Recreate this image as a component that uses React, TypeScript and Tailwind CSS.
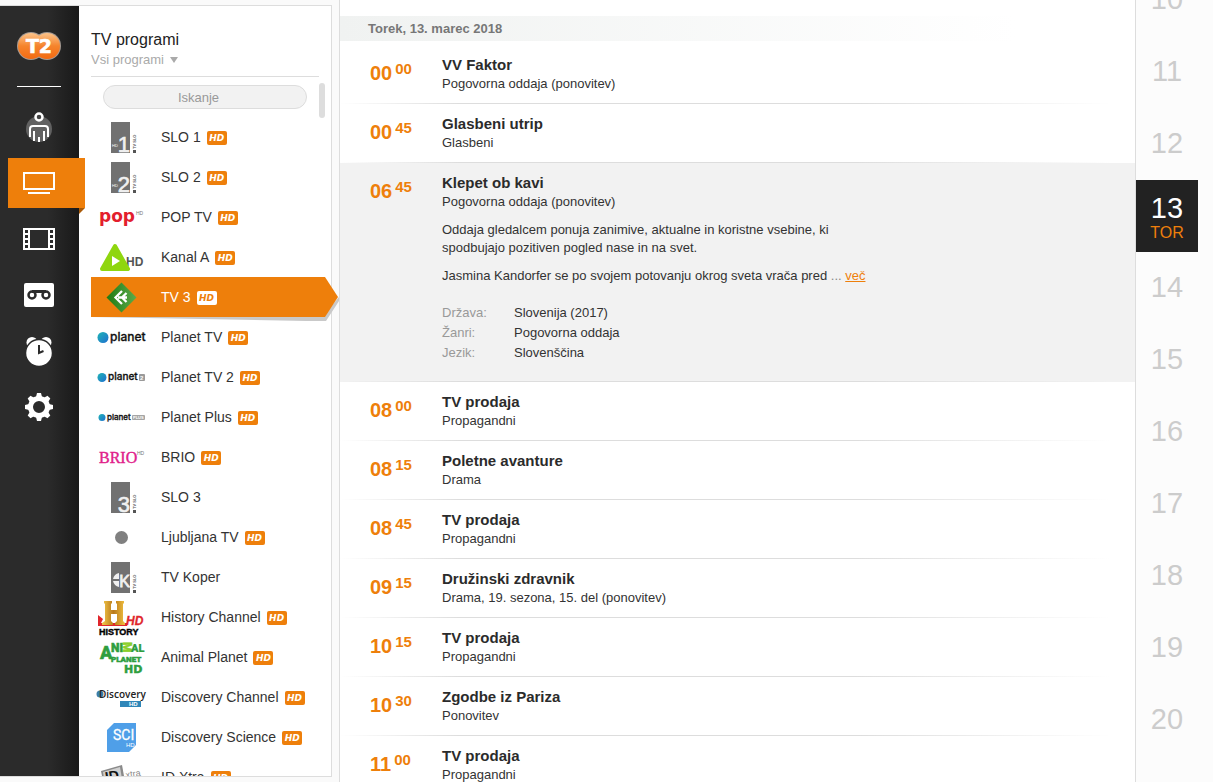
import type { ReactNode } from "react";

const SANS = "font-['Liberation_Sans',Arial,sans-serif]";

type Channel = {
  name: string;
  hd?: boolean;
  active?: boolean;
  logo: ReactNode;
};

type Show = {
  hour: string;
  minute: string;
  title: string;
  info: string;
  open?: boolean;
};

function SloLogo({ digit, hd }: { digit?: string; hd?: boolean }) {
  return (
    <g>
      <rect x="20" y="5" width="19" height="31" fill="#717171" />
      {digit && (
        <text x="39" y="35" fontSize="22" textAnchor="end" fill="#f0f0f0" stroke="#f0f0f0" strokeWidth="0.6">
          {digit}
        </text>
      )}
      {hd && (
        <text x="21" y="30" fontSize="4" fill="#ffffff">
          HD
        </text>
      )}
      <text x="45" y="32" fontSize="4" fontWeight="700" fill="#555555" transform="rotate(-90 45 32)">
        TV SLO
      </text>
      <rect x="42" y="33" width="3" height="3" fill="#555555" />
    </g>
  );
}

function PlanetLogo({ size, tag }: { size: number; tag?: string }) {
  const r = size === 13 ? 5.5 : size === 10 ? 4.5 : 3.5;
  return (
    <g>
      <defs>
        <linearGradient id={`planet${size}`} x1="0" y1="0" x2="1" y2="1">
          <stop offset="0" stopColor="#1fb5b5" />
          <stop offset="1" stopColor="#1f6fd0" />
        </linearGradient>
      </defs>
      <circle cx={size === 13 ? 12 : 11} cy="20.500" r={r} fill={`url(#planet${size})`} />
      <text
        x={size === 13 ? 19 : size === 10 ? 17 : 16}
        y={size === 13 ? 24 : 23}
        fontSize={size === 13 ? 12 : size === 10 ? 10 : 8}
        fontFamily="Inter, sans-serif"
        fontWeight="500"
        fill="#111111"
        stroke="#111111"
        strokeWidth="0.300"
      >
        planet
      </text>
      {tag === "2" && (
        <>
          <rect x="48" y="17" width="6" height="7" rx="1" fill="#9a9a9a" />
          <text x="49" y="23" fontSize="6" fontWeight="700" fill="#ffffff">
            2
          </text>
        </>
      )}
      {tag === "PLUS" && (
        <>
          <rect x="41" y="18" width="13" height="5" rx="1" fill="#a5a5a5" />
          <text x="42" y="22" fontSize="4" fontWeight="700" fill="#ffffff">
            PLUS
          </text>
        </>
      )}
    </g>
  );
}

const channels: Channel[] = [
  { name: "SLO 1", hd: true, logo: <SloLogo digit="1" hd /> },
  { name: "SLO 2", hd: true, logo: <SloLogo digit="2" hd /> },
  {
    name: "POP TV",
    hd: true,
    logo: (
      <g>
        <text
          x="8"
          y="25"
          fontSize="17"
          fontWeight="700"
          fontFamily="DejaVu Sans, sans-serif"
          fill="#e31e2d"
        >
          pop
        </text>
        <text x="45" y="18" fontSize="5" fill="#777777">
          HD
        </text>
      </g>
    ),
  },
  {
    name: "Kanal A",
    hd: true,
    logo: (
      <g>
        <text x="35" y="29" fontSize="12" fontWeight="700" fill="#555555">
          HD
        </text>
        <path d="M24 9 L37 32 H11 Z" fill="#8fd60f" stroke="#8fd60f" strokeWidth="4" strokeLinejoin="round" />
        <path d="M21 19 L29 24 L21 29 Z" fill="#ffffff" />
      </g>
    ),
  },
  {
    name: "TV 3",
    hd: true,
    active: true,
    logo: (
      <g>
        <defs>
          <linearGradient id="tv3">
            <stop offset="0" stopColor="#207a12" />
            <stop offset="1" stopColor="#5bab4a" />
          </linearGradient>
        </defs>
        <path d="M30.500 5.500 L45.500 20.500 L30.500 35.500 L15.500 20.500 Z" fill="url(#tv3)" />
        <path
          d="M31 14 L24.500 20.500 L31 27 M35.500 16 L31 20.500 L35.500 25 M27 20.500 H36"
          fill="none"
          stroke="#ffffff"
          strokeWidth="2.300"
        />
      </g>
    ),
  },
  { name: "Planet TV", hd: true, logo: <PlanetLogo size={13} /> },
  { name: "Planet TV 2", hd: true, logo: <PlanetLogo size={10} tag="2" /> },
  { name: "Planet Plus", hd: true, logo: <PlanetLogo size={8} tag="PLUS" /> },
  {
    name: "BRIO",
    hd: true,
    logo: (
      <g>
        <text x="8" y="26" fontSize="16" fontFamily="Liberation Serif, serif" fill="#e0218a" stroke="#e0218a" strokeWidth="0.4">
          BRIO
        </text>
        <text x="46" y="18" fontSize="5" fill="#777777">
          HD
        </text>
      </g>
    ),
  },
  { name: "SLO 3", logo: <SloLogo digit="3" /> },
  { name: "Ljubljana TV", hd: true, logo: <circle cx="30.500" cy="20.500" r="6.500" fill="#808080" /> },
  {
    name: "TV Koper",
    logo: (
      <g>
        <SloLogo />
        <path d="M28 16 V22 H22 A8 8 0 0 1 28 16 Z M28 30 V24 H22 A8 8 0 0 0 28 30 Z" fill="#f0f0f0" />
        <text x="39" y="30" textAnchor="end" fontSize="16" fill="#f0f0f0" stroke="#f0f0f0" strokeWidth="0.800">
          K
        </text>
      </g>
    ),
  },
  {
    name: "History Channel",
    hd: true,
    logo: (
      <g>
        <defs>
          <linearGradient id="gold">
            <stop offset="0" stopColor="#f3c94b" />
            <stop offset="0.5" stopColor="#b9791a" />
            <stop offset="1" stopColor="#f0c040" />
          </linearGradient>
        </defs>
        <path d="M7 18 L12 22 L10 26 H36 V29 H7 Z" fill="#e0262c" />
        <path
          d="M13 4 H21 V6 L20 7 V13 H26 V7 L25 6 V4 H33 V6 L32 7 V24 L34 26 V28 H24 V26 L26 24 V17 H20 V24 L22 26 V28 H11 V26 L14 24 V7 L13 6 Z"
          fill="url(#gold)"
        />
        <text x="35" y="28" fontSize="12" fontWeight="700" fontStyle="italic" fill="#e0262c" stroke="#e0262c" strokeWidth="0.300">
          HD
        </text>
        <text x="8" y="38" fontSize="9" fontWeight="700" fill="#000000" stroke="#000000" strokeWidth="0.400">
          HISTORY
        </text>
      </g>
    ),
  },
  {
    name: "Animal Planet",
    hd: true,
    logo: (
      <g fontWeight="900" fill="#2f9e3f" stroke="#2f9e3f" strokeWidth="0.500" fontFamily="Roboto, sans-serif">
        <text x="9" y="22" fontSize="18">
          A
        </text>
        <text x="20" y="15" fontSize="12">
          NI
        </text>
        <text x="32" y="5" fontSize="12" fill="#8ccf2a" stroke="#8ccf2a" transform="rotate(90 32 5)">
          M
        </text>
        <text x="40" y="15" fontSize="11" strokeWidth="0.200">
          AL
        </text>
        <text x="20" y="25" fontSize="8">
          PLANET
        </text>
        <text x="33" y="36" fontSize="11" fontFamily="DejaVu Sans, sans-serif">
          HD
        </text>
      </g>
    ),
  },
  {
    name: "Discovery Channel",
    hd: true,
    logo: (
      <g>
        <circle cx="9" cy="17" r="3.500" fill="#3d7fa8" />
        <text x="8" y="21" fontSize="10" fontFamily="Open Sans, sans-serif" fontWeight="600" fill="#222222">
          Discovery
        </text>
        <rect x="29" y="24" width="21" height="6" fill="#2f86b8" />
        <text x="38" y="29" fontSize="6" fontWeight="700" fill="#ffffff">
          HD
        </text>
      </g>
    ),
  },
  {
    name: "Discovery Science",
    hd: true,
    logo: (
      <g>
        <path d="M23 6 H45 V28 L38 35 H16 V13 Z" fill="#4f9fe8" />
        <text x="22" y="23" fontSize="14" fontFamily="Roboto, sans-serif" fill="#ffffff" stroke="#ffffff" strokeWidth="0.300">
          SCI
        </text>
        <text x="35" y="30" fontSize="6" fill="#ffffff">
          HD
        </text>
      </g>
    ),
  },
  {
    name: "ID Xtra",
    hd: true,
    logo: (
      <g>
        <path d="M10 14 L31 8 L35 30 L14 34 Z" fill="#8a8a8a" />
        <path d="M12 15 L29 10 L32 28 L15 32 Z" fill="#d0d0d0" />
        <text x="15" y="25" fontSize="14" fontWeight="700" fill="#111111" transform="rotate(-10 15 25)">
          ID
        </text>
        <text x="35" y="21" fontSize="9" fill="#888888" transform="rotate(-8 35 21)">
          xtra
        </text>
      </g>
    ),
  },
];

const shows: Show[] = [
  { hour: "00", minute: "00", title: "VV Faktor", info: "Pogovorna oddaja (ponovitev)" },
  { hour: "00", minute: "45", title: "Glasbeni utrip", info: "Glasbeni" },
  { hour: "06", minute: "45", title: "Klepet ob kavi", info: "Pogovorna oddaja (ponovitev)", open: true },
  { hour: "08", minute: "00", title: "TV prodaja", info: "Propagandni" },
  { hour: "08", minute: "15", title: "Poletne avanture", info: "Drama" },
  { hour: "08", minute: "45", title: "TV prodaja", info: "Propagandni" },
  { hour: "09", minute: "15", title: "Družinski zdravnik", info: "Drama, 19. sezona, 15. del (ponovitev)" },
  { hour: "10", minute: "15", title: "TV prodaja", info: "Propagandni" },
  { hour: "10", minute: "30", title: "Zgodbe iz Pariza", info: "Ponovitev" },
  { hour: "11", minute: "00", title: "TV prodaja", info: "Propagandni" },
];

const facts = [
  ["Država:", "Slovenija (2017)"],
  ["Žanri:", "Pogovorna oddaja"],
  ["Jezik:", "Slovenščina"],
];

const days = [10, 11, 12, 13, 14, 15, 16, 17, 18, 19, 20];

const gearTeeth = [0, 45, 90, 135, 180, 225, 270, 315];

const menu = [
  {
    label: "Profil",
    icon: (
      <>
        <circle cx="16" cy="18" r="13" fill="#616161" />
        <circle cx="16" cy="6" r="3.500" fill="#444444" stroke="#ffffff" strokeWidth="2.500" />
        <path
          d="M7 26 V18 Q7 15 10 15 H22 Q25 15 25 18 V26 M11 20 V30 M21 20 V30 M16 26 V31"
          fill="none"
          stroke="#ffffff"
          strokeWidth="2"
        />
      </>
    ),
  },
  {
    label: "Televizija",
    active: true,
    icon: (
      <>
        <rect x="1" y="6" width="30" height="16" fill="none" stroke="#ffffff" strokeWidth="2" />
        <path d="M5 26 H27" stroke="#ffffff" strokeWidth="2" />
      </>
    ),
  },
  {
    label: "Videoteka",
    icon: (
      <>
        <path fillRule="evenodd" d="M0 5 H32 V27 H0 Z M7 7 H25 V25 H7 Z" fill="#ffffff" />
        <path d="M3.500 7 V25 M28.500 7 V25" stroke="#2b2b2b" strokeWidth="3" strokeDasharray="3 2" />
      </>
    ),
  },
  {
    label: "Posnetki",
    icon: (
      <>
        <rect x="1" y="4" width="30" height="24" rx="2" fill="#ffffff" />
        <circle cx="9" cy="16" r="3.500" fill="none" stroke="#2b2b2b" strokeWidth="2.500" />
        <circle cx="23" cy="16" r="3.500" fill="none" stroke="#2b2b2b" strokeWidth="2.500" />
        <path d="M9 12.500 H23" stroke="#2b2b2b" strokeWidth="3" />
      </>
    ),
  },
  {
    label: "Opomniki",
    icon: (
      <>
        <circle cx="9" cy="7.500" r="5.500" fill="#ffffff" />
        <circle cx="23" cy="7.500" r="5.500" fill="#ffffff" />
        <circle cx="16" cy="18" r="13.500" fill="#ffffff" stroke="#2b2b2b" strokeWidth="1.500" />
        <path d="M16 10 V18 L20.500 16" fill="none" stroke="#2b2b2b" strokeWidth="2" />
      </>
    ),
  },
  {
    label: "Nastavitve",
    icon: (
      <>
        <circle cx="16" cy="16" r="8.500" fill="none" stroke="#ffffff" strokeWidth="5" />
        {gearTeeth.map((angle) => (
          <path key={angle} d="M13 6 L14 2 H18 L19 6 Z" fill="#ffffff" transform={`rotate(${angle} 16 16)`} />
        ))}
      </>
    ),
  },
];

function Brand() {
  return (
    <a href="#" aria-label="T-2" className="mt-[25px] ml-4 block">
      <svg width="46" height="30" viewBox="0 0 46 30">
        <defs>
          <linearGradient id="brand" x1="0" y1="0" x2="0" y2="1">
            <stop offset="0" stopColor="#fdc48a" />
            <stop offset="0.5" stopColor="#f5842c" />
            <stop offset="1" stopColor="#f36a12" />
          </linearGradient>
        </defs>
        <circle cx="15" cy="15" r="14" fill="#a59a92" />
        <circle cx="31" cy="15" r="14" fill="#a59a92" />
        <circle cx="15" cy="15" r="13" fill="url(#brand)" />
        <circle cx="31" cy="15" r="13" fill="url(#brand)" />
        <text
          x="23"
          y="22"
          textAnchor="middle"
          fontSize="19"
          fontWeight="700"
          fontFamily="DejaVu Sans, sans-serif"
          fill="#ffffff"
          stroke="#ffffff"
          strokeWidth="0.600"
        >
          T2
        </text>
      </svg>
    </a>
  );
}

function Sidebar() {
  return (
    <nav className="relative z-10 flex w-[79px] shrink-0 flex-col bg-linear-to-r from-[#2b2b2b] from-60% to-[#191919]">
      <Brand />
      <div className="mt-[25px] ml-[17px] h-px w-11 bg-white" />
      <ul className="mt-[15px] ml-2 flex flex-col gap-1.5">
        {menu.map((item) => (
          <li key={item.label} className="relative">
            <a
              href="#"
              aria-label={item.label}
              className={`flex h-[50px] w-[77px] items-center pl-[15px] ${item.active ? "bg-[#ee7f0b]" : ""}`}
            >
              <svg width="32" height="32" viewBox="0 0 32 32">
                {item.icon}
              </svg>
            </a>
            {item.active && (
              <svg className="absolute top-full left-[71px]" width="6" height="6" viewBox="0 0 6 6">
                <path d="M0 0 H6 L0 6 Z" fill="#a95a08" />
              </svg>
            )}
          </li>
        ))}
      </ul>
    </nav>
  );
}

function ChannelRow({ channel }: { channel: Channel }) {
  return (
    <li className="relative">
      {channel.active && (
        <svg className="absolute top-0 left-0" width="248" height="45" viewBox="0 0 248 45">
          <path d="M0 40 L215 44 H235 L248 24 V20 L233 38 Z" fill="#c9c9c9" />
          <path d="M0 0 H234 L247 20 L234 40 H0 Z" fill="#ee7f0b" />
        </svg>
      )}
      <a href="#" className="relative flex h-10 items-center">
        <svg width="60" height="40" viewBox="0 0 60 40" aria-hidden="true" className={`shrink-0 ${SANS}`}>
          {channel.logo}
        </svg>
        <span className={`ml-2.5 text-sm ${channel.active ? "text-white" : "text-[#333333]"}`}>{channel.name}</span>
        {channel.hd && (
          <span
            className={`ml-1.5 mt-0.5 flex h-3.5 w-5 items-center justify-center rounded-xs pt-px font-['DejaVu_Sans',Verdana,sans-serif] text-[9px] leading-[13px] font-bold italic ${
              channel.active ? "bg-white text-[#ee7f0b]" : "bg-[#ee7f0b] text-white"
            }`}
          >
            HD
          </span>
        )}
      </a>
    </li>
  );
}

function ChannelPanel() {
  return (
    <section className="flex min-w-0 flex-1 flex-col overflow-y-clip border-r border-[#dddddd] bg-white pl-3">
      <header className="mr-3 border-b border-[#dddddd] pt-6 pb-[7px]">
        <h1 className="text-base leading-5 text-[#222222]">TV programi</h1>
        <div className="flex items-center gap-1.5">
          <select
            aria-label="Izbor programov"
            className="appearance-none bg-transparent text-[13px] leading-[19px] text-[#aaaaaa] [field-sizing:content]"
          >
            <option>Vsi programi</option>
          </select>
          <svg width="8" height="6" viewBox="0 0 8 6" className="pointer-events-none">
            <path d="M0 0 H8 L4 6 Z" fill="#aaaaaa" />
          </svg>
        </div>
      </header>
      <div className="relative pt-2">
        <input
          type="search"
          aria-label="Iskanje"
          placeholder="Iskanje"
          className="mb-2 ml-3 block h-6 w-[204px] rounded-full border border-[#dddddd] bg-[#f2f2f2] text-center text-[13px] placeholder:text-[#999999]"
        />
        <ul>
          {channels.map((channel) => (
            <ChannelRow key={channel.name} channel={channel} />
          ))}
        </ul>
        <div className="absolute top-1.5 right-1.5 h-[35px] w-1.5 rounded-full bg-[#dddddd]" />
      </div>
    </section>
  );
}

function ShowDetails() {
  return (
    <div className="mt-2.5 w-[430px] pb-2 text-[13px] leading-[18px] text-[#333333]">
      <p>Oddaja gledalcem ponuja zanimive, aktualne in koristne vsebine, ki spodbujajo pozitiven pogled nase in na svet.</p>
      <p className="mt-2.5">
        Jasmina Kandorfer se po svojem potovanju okrog sveta vrača pred <span className="text-[#888888]">...</span>{" "}
        <a href="#" className="text-[#ee7f0b] underline">
          več
        </a>
      </p>
      <dl className="mt-[18px] grid grid-cols-[72px_1fr] leading-5">
        {facts.map(([label, value]) => (
          <div key={label} className="contents">
            <dt className="text-[#999999]">{label}</dt>
            <dd>{value}</dd>
          </div>
        ))}
      </dl>
    </div>
  );
}

function ShowRow({ show }: { show: Show }) {
  return (
    <li className={show.open ? "bg-[#f2f2f2]" : ""}>
      <article className="flex items-start py-2.5 pl-[30px]">
        <time className="flex w-[72px] shrink-0 items-start gap-[3px] pt-1.5 font-bold text-[#ee7f0b]">
          <span className="pt-0.5 text-xl leading-5">{show.hour}</span>
          <span className="text-[15px] leading-4">{show.minute}</span>
        </time>
        <div>
          <h3 className="text-[15px] leading-5 font-bold text-[#2b2b2b]">{show.title}</h3>
          <p className="text-[13px] leading-[18px] text-[#333333]">{show.info}</p>
          {show.open && <ShowDetails />}
        </div>
      </article>
      <div className="h-px bg-[linear-gradient(to_right,transparent,#dddddd_15%,#dddddd_65%,transparent_97%)]" />
    </li>
  );
}

function Schedule() {
  return (
    <main className="min-w-0 flex-1 overflow-hidden border-x border-[#dddddd] bg-white pt-4">
      <h2 className="mb-1 bg-linear-to-r from-[#f0f2f1] to-white to-85% pl-7 text-[13px] leading-[25px] font-bold text-[#777777]">
        Torek, 13. marec 2018
      </h2>
      <ul>
        {shows.map((show) => (
          <ShowRow key={show.hour + show.minute} show={show} />
        ))}
      </ul>
    </main>
  );
}

function DayPicker() {
  return (
    <aside className="w-[77px] shrink-0 overflow-hidden bg-[#fcfcfc]">
      <ul className="-mt-9 w-[62px]">
        {days.map((day) => (
          <li key={day}>
            <a
              href="#"
              className={`flex h-[72px] flex-col items-center justify-center text-[29px] leading-[30px] ${
                day === 13 ? "bg-[#222222] pt-1 text-white" : "pb-0.5 text-[#cccccc]"
              }`}
            >
              {day}
              {day === 13 && <span className="text-base leading-5 text-[#ee7f0b]">TOR</span>}
            </a>
          </li>
        ))}
      </ul>
    </aside>
  );
}

export default function App() {
  return (
    <div className={`flex h-screen overflow-hidden bg-[#fafafa] ${SANS}`}>
      <div className="relative z-10 my-[5px] mr-[7px] flex w-[332px] shrink-0 border-y border-[#dddddd]">
        <Sidebar />
        <ChannelPanel />
      </div>
      <Schedule />
      <DayPicker />
    </div>
  );
}
